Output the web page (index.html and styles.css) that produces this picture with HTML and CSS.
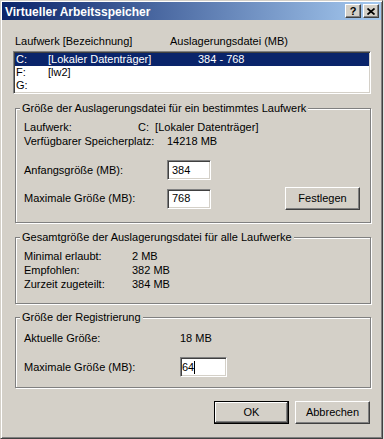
FILE: index.html
```html
<!DOCTYPE html>
<html lang="de">
<head>
  <meta charset="UTF-8" />
  <title>Virtueller Arbeitsspeicher</title>
  <link rel="stylesheet" href="styles.css">
</head>
<body>

  <div class="window">
    <!-- Title bar -->
    <div class="titlebar">
      <span class="title">Virtueller Arbeitsspeicher</span>
      <div class="caption-buttons">
        <button class="cap-btn cap-help" title="Hilfe">?</button>
        <button class="cap-btn" title="Schließen">
          <svg width="8" height="7" viewBox="0 0 8 7">
            <path d="M0.5 0.5L7.5 6.5M7.5 0.5L0.5 6.5" stroke="#000" stroke-width="1.7" fill="none"/>
          </svg>
        </button>
      </div>
    </div>

    <div class="client">
      <!-- Drive list -->
      <div class="list-head">
        <span class="h-drive">Laufwerk [Bezeichnung]</span>
        <span>Auslagerungsdatei (MB)</span>
      </div>
      <div class="listbox">
        <div class="row selected">
          <span class="c-drive">C:</span>
          <span class="c-label">[Lokaler Datenträger]</span>
          <span>384 - 768</span>
        </div>
        <div class="row">
          <span class="c-drive">F:</span>
          <span class="c-label">[lw2]</span>
          <span></span>
        </div>
        <div class="row">
          <span class="c-drive">G:</span>
          <span class="c-label"></span>
          <span></span>
        </div>
      </div>

      <!-- Size for selected drive -->
      <fieldset class="group group-drive">
        <legend>Größe der Auslagerungsdatei für ein bestimmtes Laufwerk</legend>
        <div class="info">
          <span class="lbl-drive">Laufwerk:</span>
          <span>C:&nbsp; [Lokaler Datenträger]</span>
        </div>
        <div class="info">
          <span class="lbl-wide">Verfügbarer Speicherplatz:</span>
          <span>14218 MB</span>
        </div>
        <div class="field">
          <span class="lbl-wide">Anfangsgröße (MB):</span>
          <div class="edit">384</div>
        </div>
        <div class="field field-last">
          <span class="lbl-wide">Maximale Größe (MB):</span>
          <div class="edit">768</div>
          <button class="btn btn-set">Festlegen</button>
        </div>
      </fieldset>

      <!-- Totals -->
      <fieldset class="group group-total">
        <legend>Gesamtgröße der Auslagerungsdatei für alle Laufwerke</legend>
        <div class="info">
          <span class="lbl-total">Minimal erlaubt:</span>
          <span>2 MB</span>
        </div>
        <div class="info">
          <span class="lbl-total">Empfohlen:</span>
          <span>382 MB</span>
        </div>
        <div class="info">
          <span class="lbl-total">Zurzeit zugeteilt:</span>
          <span>384 MB</span>
        </div>
      </fieldset>

      <!-- Registry -->
      <fieldset class="group group-reg">
        <legend>Größe der Registrierung</legend>
        <div class="info">
          <span class="lbl-reg">Aktuelle Größe:</span>
          <span>18 MB</span>
        </div>
        <div class="field">
          <span class="lbl-reg">Maximale Größe (MB):</span>
          <div class="edit edit-reg">64<span class="caret"></span></div>
        </div>
      </fieldset>

      <div class="actions">
        <button class="btn btn-default">OK</button>
        <button class="btn">Abbrechen</button>
      </div>
    </div>
  </div>

</body>
</html>
```
FILE: styles.css
```css
:root {
  --face: #D4D0C8;
  --light: #ffffff;
  --shadow: #808080;
  --dark: #404040;
  --title-from: #0A246A;
  --title-to: #A6CAF0;
  --select: #0A246A;
}

body {
  margin: 0;
  background: #e2e2e2;
  font-family: 'Liberation Sans', Arial, sans-serif;
  font-size: 11px;
  line-height: 13px;
  color: #000;
}

/* Window frame */
.window {
  width: 383px;
  height: 439px;
  box-sizing: border-box;
  background: var(--face);
  border: 1px solid;
  border-color: var(--face) var(--dark) var(--dark) var(--face);
  box-shadow: inset 1px 1px var(--light), inset -1px -1px var(--shadow);
  padding: 1px;
  display: flex;
  flex-direction: column;
}

.titlebar {
  height: 18px;
  display: flex;
  align-items: center;
  padding: 0 2px 0 3px;
  background: linear-gradient(to right, var(--title-from), var(--title-to));
}

.title {
  flex: 1;
  color: #fff;
  font-weight: bold;
  font-size: 12px;
  line-height: 16px;
  padding-top: 2px;
}

.caption-buttons {
  display: flex;
  gap: 2px;
}

.cap-btn {
  width: 16px;
  height: 14px;
  box-sizing: border-box;
  padding: 0;
  display: flex;
  align-items: center;
  justify-content: center;
  background: var(--face);
  border: 1px solid;
  border-color: var(--light) var(--dark) var(--dark) var(--light);
  box-shadow: inset -1px -1px var(--shadow);
}

.cap-help {
  font-family: 'Liberation Sans', Arial, sans-serif;
  font-weight: bold;
  font-size: 11px;
  line-height: 11px;
  color: #000;
}

/* Dialog body */
.client {
  flex: 1;
  padding: 15px 10px 0 11px;
  display: flex;
  flex-direction: column;
}

.list-head {
  display: flex;
  padding-left: 2px;
}

.h-drive {
  width: 155px;
}

.listbox,
.edit {
  box-sizing: border-box;
  background: #fff;
  border: 1px solid;
  border-color: var(--shadow) var(--light) var(--light) var(--shadow);
  box-shadow: inset 1px 1px var(--dark), inset -1px -1px var(--face);
}

.listbox {
  margin-top: 3px;
  height: 43px;
  padding: 1px;
}

.row {
  display: flex;
  height: 13px;
  padding-left: 1px;
  white-space: nowrap;
}

.row.selected {
  background: var(--select);
  color: #fff;
}

.c-drive {
  width: 32px;
}

.c-label {
  width: 150px;
}

/* Group boxes */
.group {
  margin: 8px 0 0 2px;
  padding: 5px 10px 12px 8px;
  border: 1px solid var(--shadow);
  box-shadow: inset 1px 1px var(--light), 1px 1px var(--light);
  min-width: 0;
}

.group legend {
  padding: 0 2px;
  margin-left: -4px;
  background: var(--face);
  line-height: 13px;
}

.group-total {
  padding-bottom: 12px;
}

.group-reg {
  margin-top: 7px;
  padding-top: 7px;
  padding-bottom: 10px;
}

.info {
  display: flex;
  line-height: 14px;
  white-space: nowrap;
}

.field {
  display: flex;
  align-items: center;
  margin-top: 12px;
  white-space: nowrap;
}

.field-last {
  margin-top: 7px;
}

.lbl-drive { width: 114px; }
.lbl-wide { width: 143px; }
.lbl-total { width: 108px; }
.lbl-reg { width: 156px; }

.edit {
  width: 44px;
  height: 20px;
  padding: 0 4px;
  display: flex;
  align-items: center;
}

.edit-reg {
  width: 47px;
  padding-left: 1px;
}

.caret {
  width: 1px;
  height: 13px;
  background: #000;
}

/* Push buttons */
.btn {
  width: 75px;
  height: 23px;
  box-sizing: border-box;
  padding: 0;
  font: inherit;
  color: #000;
  background: var(--face);
  border: 1px solid;
  border-color: var(--light) var(--dark) var(--dark) var(--light);
  box-shadow: inset -1px -1px var(--shadow);
}

.btn-set {
  margin-left: auto;
}

.btn-default {
  border-color: #000;
  box-shadow: inset -1px -1px var(--dark), inset 1px 1px var(--light), inset -2px -2px var(--shadow);
}

.actions {
  display: flex;
  justify-content: flex-end;
  gap: 6px;
  margin-top: 13px;
  padding-right: 1px;
}
```
